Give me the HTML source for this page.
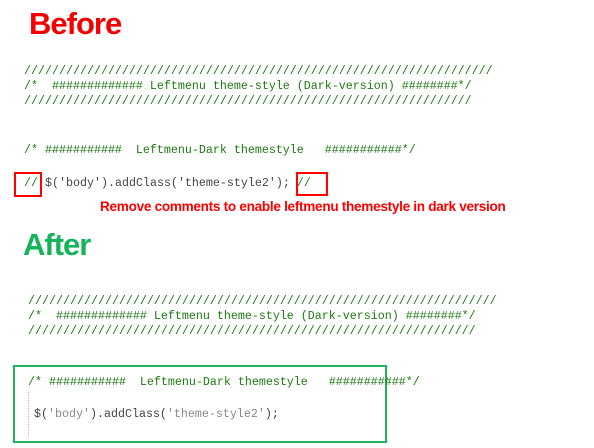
<!DOCTYPE html>
<html><head><style>
body{margin:0;width:594px;height:448px;background:#fff;position:relative;overflow:hidden;font-family:"Liberation Sans",sans-serif}
.a{position:absolute;white-space:pre}
.m{font-family:"Liberation Mono",monospace;font-size:11.67px;color:#1d7a12;line-height:15px}
.h{font-weight:bold;font-size:31px;letter-spacing:-1px}
.k{color:#444}.s{color:#888}
.box{position:absolute;box-sizing:border-box}
</style></head><body>
<div class="a h" style="left:29px;top:6px;color:#f40000">Before</div>
<div class="a m" style="left:24px;top:64px">///////////////////////////////////////////////////////////////////
/*  ############# Leftmenu theme-style (Dark-version) ########*/
////////////////////////////////////////////////////////////////</div>
<div class="a m" style="left:24px;top:143px">/* ###########  Leftmenu-Dark themestyle   ###########*/</div>
<div class="a m" style="left:24px;top:176px">// <span class="k">$(</span><span class="k">'body'</span><span class="k">).addClass(</span><span class="k">'theme-style2'</span><span class="k">);</span> //</div>
<div class="box" style="left:14px;top:172px;width:28px;height:25px;border:2px solid #f00"></div>
<div class="box" style="left:296px;top:172px;width:32px;height:24px;border:2px solid #f00"></div>
<div class="a" style="left:100px;top:199px;color:#f00;font-weight:bold;font-size:13.6px;letter-spacing:-0.3px">Remove comments to enable leftmenu themestyle in dark version</div>
<div class="a h" style="left:23px;top:227px;color:#15b45a">After</div>
<div class="a m" style="left:28px;top:294px">///////////////////////////////////////////////////////////////////
/*  ############# Leftmenu theme-style (Dark-version) ########*/
////////////////////////////////////////////////////////////////</div>
<div class="box" style="left:13px;top:365px;width:374px;height:78px;border:2px solid #1fb35e"></div>
<div class="a m" style="left:28px;top:375px">/* ###########  Leftmenu-Dark themestyle   ###########*/</div>
<div class="a m" style="left:34px;top:407px"><span class="k">$(</span><span class="s">'body'</span><span class="k">).addClass(</span><span class="s">'theme-style2'</span><span class="k">);</span></div>
<div class="box" style="left:28px;top:392px;width:0;height:45px;border-left:1px dotted #bbb"></div>
</body></html>
